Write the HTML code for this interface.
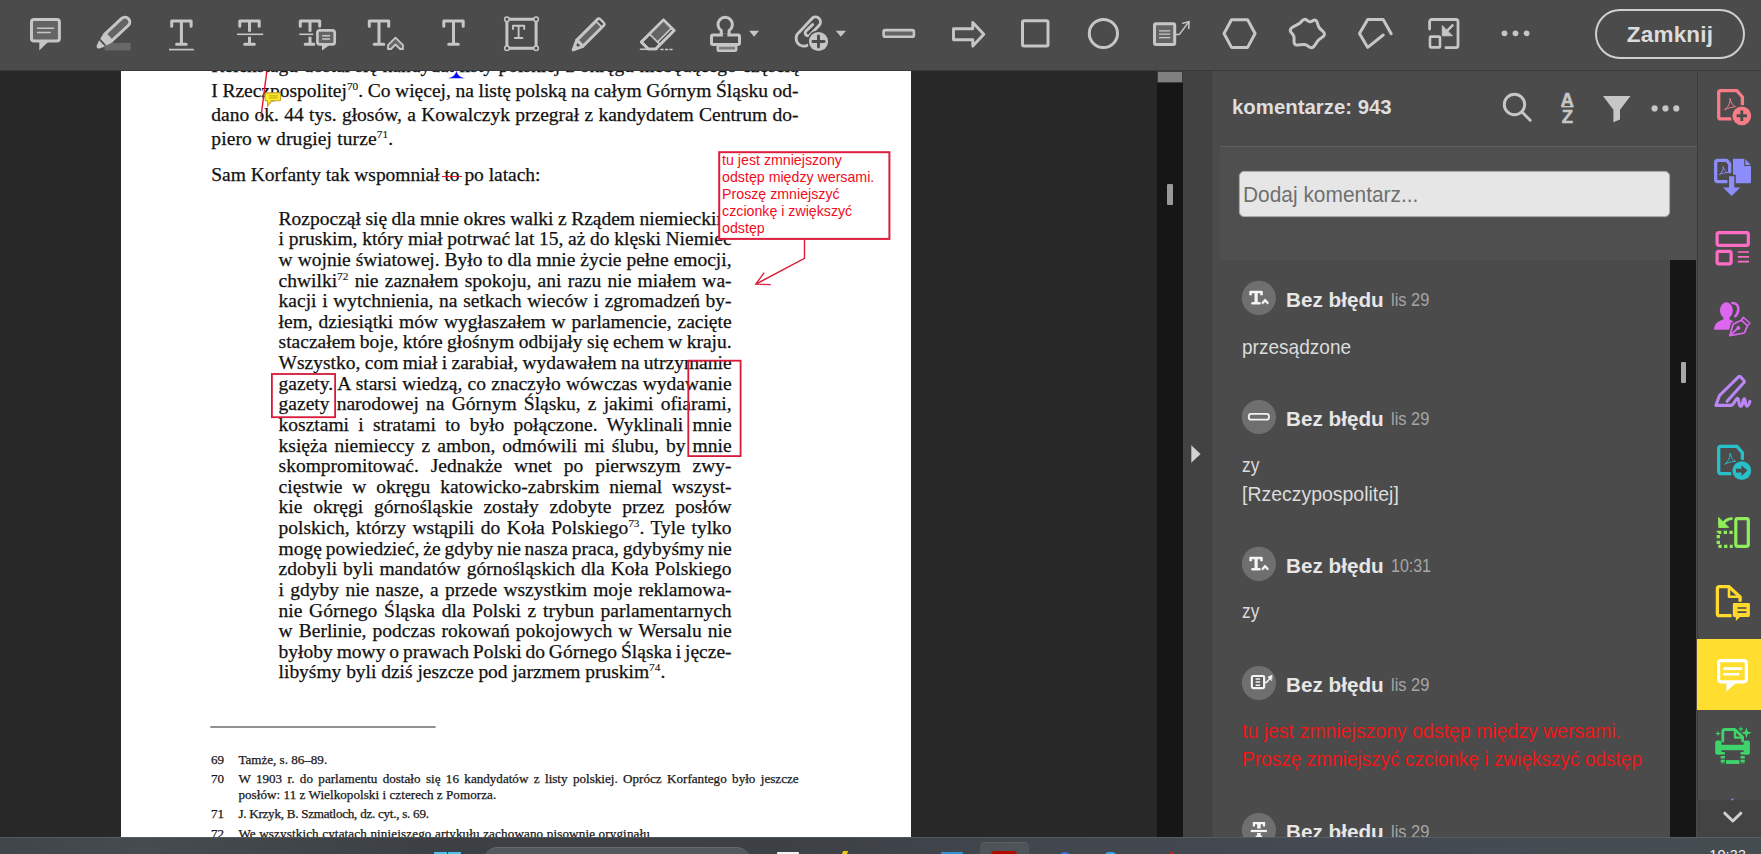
<!DOCTYPE html>
<html lang="pl">
<head>
<meta charset="utf-8">
<title>Adobe Acrobat – komentarze</title>
<style>
*{box-sizing:border-box;margin:0;padding:0}
html,body{width:1761px;height:854px;overflow:hidden;background:#282828}
body{position:relative;font-family:"Liberation Sans",sans-serif;color:#e4e4e4}
.abs{position:absolute}
#toolbar{position:absolute;left:0;top:0;width:1761px;height:71px;background:#4b4b4b;border-bottom:1px solid #3a3a3a}
#docarea{position:absolute;left:0;top:71px;width:1157px;height:766px;background:#282828;overflow:hidden}
#page{position:absolute;left:121px;top:0;width:790px;height:766px;background:#fff}
#doc{position:absolute;left:0;top:0;width:1157px;height:837px;overflow:hidden;pointer-events:none}
.bl,.fl{position:absolute;white-space:nowrap;color:#111;font-family:"Liberation Serif",serif;-webkit-text-stroke:.25px #111}
.bl{font-size:19.5px;line-height:23px}
.fl{font-size:13.1px;line-height:16px;color:#1a1a1a}
.j{text-align:justify;text-align-last:justify}
sup{font-size:58%;line-height:0;vertical-align:baseline;position:relative;top:-0.62em;-webkit-text-stroke:.12px #111}
.st{position:relative}
.st:after{content:"";position:absolute;left:-2px;right:-2px;top:57%;height:1px;background:#e8112d}
#vscroll{position:absolute;left:1157px;top:71px;width:26px;height:766px;background:#161616}
#splitter{position:absolute;left:1183px;top:71px;width:29px;height:766px;background:#424242}
#panel{position:absolute;left:1212px;top:71px;width:485px;height:766px;background:#4b4b4b;overflow:hidden;box-shadow:inset 1px 0 0 #464646}
#rail{position:absolute;left:1697px;top:71px;width:64px;height:766px;background:#4b4b4b;box-shadow:inset 1px 0 0 #3b3b3b}
#taskbar{position:absolute;left:0;top:837px;width:1761px;height:17px;background:linear-gradient(90deg,#404549 0%,#464b4f 8%,#3c4045 25%,#3d4146 45%,#42474e 60%,#444952 75%,#454d51 100%);overflow:hidden}
#closebtn{position:absolute;left:1595px;top:9px;width:150px;height:50px;border:2px solid #cfcfcf;border-radius:25px;text-align:center;line-height:47px;font-weight:bold;font-size:22.5px;color:#dcdcdc}
#closebtn span{display:inline-block;transform:scaleX(1);letter-spacing:.2px}
.sx{display:inline-block;transform-origin:0 50%;white-space:nowrap}
#phead{position:absolute;left:19.6px;top:24px;font-weight:bold;font-size:19.8px;line-height:24px;color:#dedede}
#addsec{position:absolute;left:8px;top:75px;width:477px;height:114px;background:#4f4f4f;border-top:1px solid #606060}
#addbox{position:absolute;left:27px;top:100px;width:431px;height:46px;background:#e6e6e6;border:1px solid #a9a9a9;border-radius:5px;color:#707070;font-size:22px;line-height:46.500px;padding-left:3.2px;box-shadow:0 0 0 1px #585858}
#ctrack{position:absolute;left:458px;top:189px;width:26px;height:577px;background:#161616}
#cthumb{position:absolute;left:468.5px;top:291px;width:5.5px;height:21px;background:#a8a8a8;border-radius:1px}
#railsel{position:absolute;left:0;top:568px;width:64px;height:71px;background:#ffde2f}
#railmore{position:absolute;left:0;top:729px;width:64px;height:37px;background:#434343}
.cn,.cd,.ct{position:absolute;white-space:nowrap;line-height:24px}
.cn{font-weight:bold;font-size:20px;color:#e6e6e6}
.cd{font-size:18px;color:#a6a6a6}
.ct{font-size:21px;color:#dcdcdc}
.ct.red{color:#ee1616}
#vthumb0{position:absolute;left:0;top:0;width:26px;height:12px;background:#808080;border:1px solid #3d3d3d;border-bottom-width:1px}
#vthumb{position:absolute;left:10px;top:113px;width:6px;height:21px;background:#999;border-radius:1px}
.co{position:absolute;white-space:nowrap;font-family:"Liberation Sans",sans-serif;font-size:14.2px;line-height:17px;color:#f00c1c}
</style>
</head>
<body>
<div id="docarea"><div id="page"></div></div>
<div id="doc">
<div class="bl j" style="left:211.3px;top:54.32px;width:587.3px">Reichstagu dostał się kandydat listy polskiej z okręgu niebędącego częścią</div>
<div class="bl j" style="left:211.3px;top:78.72px;width:587.3px;word-spacing:-0.293px">I Rzeczpospolitej<sup>70</sup>. Co więcej, na listę polską na całym Górnym Śląsku od-</div>
<div class="bl j" style="left:211.3px;top:102.72px;width:587.3px">dano ok. 44 tys. głosów, a Kowalczyk przegrał z kandydatem Centrum do-</div>
<div class="bl" style="left:211.3px;top:126.52px;letter-spacing:0.114px">piero w drugiej turze<sup>71</sup>.</div>
<div class="bl" style="left:211.3px;top:163.32px;letter-spacing:-0.031px">Sam Korfanty tak wspomniał <span class="st">to</span> po latach:</div>
<div class="bl j" style="left:278.6px;top:206.72px;width:453.0px;word-spacing:-0.405px">Rozpoczął się dla mnie okres walki z Rządem niemieckim</div>
<div class="bl j" style="left:278.6px;top:227.34px;width:453.0px;word-spacing:-0.219px">i pruskim, który miał potrwać lat 15, aż do klęski Niemiec</div>
<div class="bl j" style="left:278.6px;top:247.96px;width:453.0px">w wojnie światowej. Było to dla mnie życie pełne emocji,</div>
<div class="bl j" style="left:278.6px;top:268.58px;width:453.0px">chwilki<sup>72</sup> nie zaznałem spokoju, ani razu nie miałem wa-</div>
<div class="bl j" style="left:278.6px;top:289.20px;width:453.0px">kacji i wytchnienia, na setkach wieców i zgromadzeń by-</div>
<div class="bl j" style="left:278.6px;top:309.82px;width:453.0px">łem, dziesiątki mów wygłaszałem w parlamencie, zacięte</div>
<div class="bl j" style="left:278.6px;top:330.44px;width:453.0px;word-spacing:-0.541px">staczałem boje, które głośnym odbijały się echem w kraju.</div>
<div class="bl j" style="left:278.6px;top:351.06px;width:453.0px;word-spacing:-0.538px">Wszystko, com miał i zarabiał, wydawałem na utrzymanie</div>
<div class="bl j" style="left:278.6px;top:371.68px;width:453.0px">gazety. A starsi wiedzą, co znaczyło wówczas wydawanie</div>
<div class="bl j" style="left:278.6px;top:392.30px;width:453.0px">gazety narodowej na Górnym Śląsku, z jakimi ofiarami,</div>
<div class="bl j" style="left:278.6px;top:412.92px;width:453.0px">kosztami i stratami to było połączone. Wyklinali mnie</div>
<div class="bl j" style="left:278.6px;top:433.54px;width:453.0px">księża niemieccy z ambon, odmówili mi ślubu, by mnie</div>
<div class="bl j" style="left:278.6px;top:454.16px;width:453.0px">skompromitować. Jednakże wnet po pierwszym zwy-</div>
<div class="bl j" style="left:278.6px;top:474.78px;width:453.0px">cięstwie w okręgu katowicko-zabrskim niemal wszyst-</div>
<div class="bl j" style="left:278.6px;top:495.40px;width:453.0px">kie okręgi górnośląskie zostały zdobyte przez posłów</div>
<div class="bl j" style="left:278.6px;top:516.02px;width:453.0px">polskich, którzy wstąpili do Koła Polskiego<sup>73</sup>. Tyle tylko</div>
<div class="bl j" style="left:278.6px;top:536.64px;width:453.0px;word-spacing:-1.080px">mogę powiedzieć, że gdyby nie nasza praca, gdybyśmy nie</div>
<div class="bl j" style="left:278.6px;top:557.26px;width:453.0px">zdobyli byli mandatów górnośląskich dla Koła Polskiego</div>
<div class="bl j" style="left:278.6px;top:577.88px;width:453.0px">i gdyby nie nasze, a przede wszystkim moje reklamowa-</div>
<div class="bl j" style="left:278.6px;top:598.50px;width:453.0px">nie Górnego Śląska dla Polski z trybun parlamentarnych</div>
<div class="bl j" style="left:278.6px;top:619.12px;width:453.0px">w Berlinie, podczas rokowań pokojowych w Wersalu nie</div>
<div class="bl j" style="left:278.6px;top:639.74px;width:453.0px;word-spacing:-1.028px">byłoby mowy o prawach Polski do Górnego Śląska i jęcze-</div>
<div class="bl" style="left:278.6px;top:660.36px;letter-spacing:-0.022px">libyśmy byli dziś jeszcze pod jarzmem pruskim<sup>74</sup>.</div>
<div class="fl" style="left:210.9px;top:752.28px;letter-spacing:0.153px">69</div>
<div class="fl" style="left:238.4px;top:752.28px;letter-spacing:-0.007px">Tamże, s. 86–89.</div>
<div class="fl" style="left:210.9px;top:771.18px;letter-spacing:0.153px">70</div>
<div class="fl j" style="left:238.4px;top:771.18px;width:560.2px">W 1903 r. do parlamentu dostało się 16 kandydatów z listy polskiej. Oprócz Korfantego było jeszcze</div>
<div class="fl" style="left:238.4px;top:787.08px;letter-spacing:0.050px">posłów: 11 z Wielkopolski i czterech z Pomorza.</div>
<div class="fl" style="left:210.9px;top:806.38px;letter-spacing:0.153px">71</div>
<div class="fl" style="left:238.4px;top:806.38px;letter-spacing:-0.261px">J. Krzyk, B. Szmatloch, dz. cyt., s. 69.</div>
<div class="fl" style="left:210.9px;top:825.98px;letter-spacing:0.153px">72</div>
<div class="fl" style="left:238.4px;top:825.98px;letter-spacing:0.141px">We wszystkich cytatach niniejszego artykułu zachowano pisownię oryginału</div>
<svg class="abs" style="left:0;top:0" width="1157" height="837" viewBox="0 0 1157 837" fill="none">
<!-- red slanted line -->
<path d="M266.800 71L261 117" stroke="#e8112d" stroke-width="1.400"/>
<!-- blue caret -->
<path d="M456.400 70.200C457 75 459.800 77 465 78.200L448 78.200C453 77 455.800 75 456.400 70.200z" fill="#0a0aff"/>
<!-- sticky note -->
<path d="M266 92.900h13.500a1 1 0 0 1 1 1v5.900a1 1 0 0 1 -1 1h-8l-4 5.400v-5.400h-1.500a1 1 0 0 1 -1 -1v-5.900a1 1 0 0 1 1 -1z" fill="#fdee2a" stroke="#c9a227" stroke-width="1.100"/>
<path d="M269 95.900h8.800M269 98h8.800" stroke="#b8950f" stroke-width="0.900"/>
<!-- rectangles -->
<rect x="271.900" y="374" width="63.200" height="43.200" stroke="#d9193a" stroke-width="1.800"/>
<rect x="688.300" y="360.700" width="52.300" height="95.400" stroke="#d9193a" stroke-width="1.800"/>
<!-- callout -->
<path d="M804.500 239v19.400L755.800 284.200M764.200 272.600L755.800 284.200L770.800 284.600" stroke="#dc1f3e" stroke-width="1.400"/>
<rect x="719.200" y="152.200" width="170.200" height="86.700" fill="#ffffff" stroke="#dc1f3e" stroke-width="2"/>
<!-- footnote rule -->
<path d="M210.300 727h225.300" stroke="#222" stroke-width="1"/>
</svg>
<div class="co" style="left:722.100px;top:151.500px">tu jest zmniejszony<br>odstęp między wersami.<br>Proszę zmniejszyć<br>czcionkę i zwiększyć<br>odstęp</div>

</div>
<div id="vscroll"><div id="vthumb0"></div><div id="vthumb"></div></div>
<div id="splitter"><svg class="abs" style="left:0;top:0" width="29" height="766"><path d="M8.300 374.200v17.600l9.300 -8.800z" fill="#d2d2d2"/></svg></div>
<div id="panel">
<div id="phead"><span class="sx" style="transform:scaleX(1.03)">komentarze: 943</span></div>
<svg class="abs" style="left:278px;top:10px" width="200" height="50" viewBox="1490 81 200 50" fill="none" stroke="#c6c6c6" stroke-width="3" stroke-linecap="round">
<circle cx="1514.500" cy="104.500" r="10.200"/>
<path d="M1522 112l8.200 8.200"/>
<text x="1567.300" y="106.200" text-anchor="middle" font-family="Liberation Sans, sans-serif" font-weight="bold" font-size="18" fill="#c6c6c6" stroke="#c6c6c6" stroke-width=".500">A</text>
<path d="M1561.300 106.700h12.200" stroke-width="1.400" stroke-linecap="butt"/>
<text x="1567.300" y="122.700" text-anchor="middle" font-family="Liberation Sans, sans-serif" font-weight="bold" font-size="18.500" fill="#c6c6c6" stroke="#c6c6c6" stroke-width=".500">Z</text>
<path d="M1603 96.100h27.500l-10.500 13.700v9.600l-6.600 2.900v-12.500z" fill="#c6c6c6" stroke="none"/>
<g fill="#c6c6c6" stroke="none"><circle cx="1654.600" cy="108.400" r="3.100"/><circle cx="1665.500" cy="108.400" r="3.100"/><circle cx="1676.300" cy="108.400" r="3.100"/></g>
</svg>
<div id="addsec"></div>
<div id="addbox"><span class="sx" style="transform:scaleX(.95)">Dodaj komentarz...</span></div>
<svg class="abs" style="left:0;top:0" width="485" height="766" viewBox="1212 71 485 766">
<circle cx="1258.900" cy="297.9" r="17.100" fill="#6f6f6f"/>
<g stroke="#f4f4f4" fill="none" stroke-linecap="butt" stroke-linejoin="round"><path d="M1250.6 295.3v-3.300h10.900v3.300" stroke-width="2.600"/><path d="M1256.1 292.0v11.200" stroke-width="3.200"/><path d="M1252.5 303.2h7.200" stroke-width="2.500" stroke-linecap="round"/></g><path d="M1261.2 302.3l3.900 -4.300l3.900 4.300v2.100h-2.100l-1.800 -2l-1.800 2h-2.100z" fill="#f4f4f4" stroke="#6f6f6f" stroke-width="0.900"/>
<circle cx="1258.900" cy="417.0" r="17.100" fill="#6f6f6f"/>
<rect x="1248.8" y="413.9" width="20.200" height="5.800" rx="2.500" fill="none" stroke="#f2f2f2" stroke-width="1.800"/>
<circle cx="1258.900" cy="563.9" r="17.100" fill="#6f6f6f"/>
<g stroke="#f4f4f4" fill="none" stroke-linecap="butt" stroke-linejoin="round"><path d="M1250.6 561.3v-3.300h10.900v3.300" stroke-width="2.600"/><path d="M1256.1 558.0v11.200" stroke-width="3.200"/><path d="M1252.5 569.2h7.200" stroke-width="2.500" stroke-linecap="round"/></g><path d="M1261.2 568.3l3.900 -4.300l3.900 4.300v2.100h-2.100l-1.800 -2l-1.800 2h-2.100z" fill="#f4f4f4" stroke="#6f6f6f" stroke-width="0.900"/>
<circle cx="1258.900" cy="683.0" r="17.100" fill="#6f6f6f"/>
<g stroke="#f4f4f4" fill="none" stroke-linecap="round" stroke-linejoin="round"><rect x="1251.9" y="676.0" width="12.250" height="12.100" rx="1.300" stroke-width="2.200" fill="#606060"/><path d="M1255.6 678.9h4.500M1255.6 682.1h4.500M1255.6 685.3h4.500" stroke-width="1.500" stroke-linecap="butt"/><path d="M1265.2 682.5h1.200l5 -5.800" stroke-width="1.500"/><path d="M1271.8 675.2l-3.900 1.800l3.500 3.500z" fill="#f4f4f4" stroke-width="0.600"/></g>
<circle cx="1258.900" cy="830.1" r="17.100" fill="#6f6f6f"/>
<g stroke="#f4f4f4" fill="none" stroke-linecap="butt" stroke-linejoin="miter"><path d="M1253.9 826.5v-3.400h10.100v3.400" stroke-width="2.200"/><path d="M1258.9 822.0v6.400M1258.9 833.1v4" stroke-width="3.600"/><path d="M1255.7 836.6h6.500" stroke-width="2"/><path d="M1250.8 831.0h16.100" stroke-width="2.200"/></g>
</svg>
<div class="cn" style="left:74.3px;top:216.7px"><span class="sx nm" style="transform:scaleX(1.035)">Bez błędu</span></div>
<div class="cd" style="left:178.6px;top:216.7px"><span class="sx" style="transform:scaleX(0.9136)">lis 29</span></div>
<div class="ct" style="left:29.9px;top:263.7px"><span class="sx" style="transform:scaleX(0.9073)">przesądzone</span></div>
<div class="cn" style="left:74.3px;top:335.8px"><span class="sx nm" style="transform:scaleX(1.035)">Bez błędu</span></div>
<div class="cd" style="left:178.6px;top:335.8px"><span class="sx" style="transform:scaleX(0.9136)">lis 29</span></div>
<div class="ct" style="left:29.9px;top:381.9px"><span class="sx" style="transform:scaleX(0.8238)">zy</span></div>
<div class="ct" style="left:29.9px;top:410.6px"><span class="sx" style="transform:scaleX(0.9264)">[Rzeczypospolitej]</span></div>
<div class="cn" style="left:74.3px;top:482.7px"><span class="sx nm" style="transform:scaleX(1.035)">Bez błędu</span></div>
<div class="cd" style="left:178.6px;top:482.7px"><span class="sx" style="transform:scaleX(0.8880)">10:31</span></div>
<div class="ct" style="left:29.9px;top:527.7px"><span class="sx" style="transform:scaleX(0.8238)">zy</span></div>
<div class="cn" style="left:74.3px;top:601.8px"><span class="sx nm" style="transform:scaleX(1.035)">Bez błędu</span></div>
<div class="cd" style="left:178.6px;top:601.8px"><span class="sx" style="transform:scaleX(0.9136)">lis 29</span></div>
<div class="ct red" style="left:29.9px;top:647.8px"><span class="sx" style="transform:scaleX(0.9278)">tu jest zmniejszony odstęp między wersami.</span></div>
<div class="ct red" style="left:29.9px;top:675.9px"><span class="sx" style="transform:scaleX(0.9063)">Proszę zmniejszyć czcionkę i zwiększyć odstęp</span></div>
<div class="cn" style="left:74.3px;top:748.9px"><span class="sx nm" style="transform:scaleX(1.035)">Bez błędu</span></div>
<div class="cd" style="left:178.6px;top:748.9px"><span class="sx" style="transform:scaleX(0.9136)">lis 29</span></div>
<div id="ctrack"></div><div id="cthumb"></div>

</div>
<div id="rail">
<div id="railsel"></div>
<div id="railmore"></div>
<svg class="abs" style="left:0;top:0" width="64" height="766" viewBox="1697 71 64 766" fill="none" stroke-linejoin="round" stroke-linecap="round">
<!-- 1 create pdf -->
<g stroke="#f97c86" stroke-width="3.300">
<path d="M1731 118.900h-10.300a2 2 0 0 1 -2 -2v-24.200a2 2 0 0 1 2 -2h16.300l5.400 6.300v8"/>
<path d="M1725 109.500c3 -2 5.500 -7 5 -11c1 4.500 3.500 8 6.500 8.500c-4 -0.300 -8 0.800 -11.500 2.500z" stroke-width="1"/>
</g>
<circle cx="1741.800" cy="115.800" r="10.900" fill="#4b4b4b"/>
<circle cx="1741.800" cy="115.800" r="9.400" fill="#f97c86"/>
<path d="M1741.800 110.600v10.400M1736.600 115.800h10.400" stroke="#4b4b4b" stroke-width="2.900" stroke-linecap="butt"/>
<!-- 2 export pdf -->
<g stroke="#8c8cfb" stroke-width="3.300">
<path d="M1729.500 181.600h-11.800a2 2 0 0 1 -2 -2v-17.200a2 2 0 0 1 2 -2h9l3 3.400v8"/>
<path d="M1719.500 174.500c2.200 -1.500 4 -5 3.700 -8c0.800 3.300 2.600 5.800 4.800 6.200c-3 -0.200 -6 0.600 -8.500 1.800z" stroke-width="0.900"/>
</g>
<path d="M1733 158.700h12l6 6.600v16.500a1.500 1.500 0 0 1 -1.500 1.500h-16.500z" fill="#8c8cfb"/>
<path d="M1744.800 158.900v6.600h6" fill="none" stroke="#4b4b4b" stroke-width="1.100" stroke-linejoin="miter"/>
<path d="M1727.400 174.700h8.400v11.400h6.500l-10.600 11.300l-10.600 -11.300h6.300z" fill="#4b4b4b"/>
<path d="M1729 176.200h5.300v11.400h6l-8.600 8.300l-8.600 -8.300h5.900z" fill="#8c8cfb"/>
<!-- 3 organize -->
<g stroke="#ff6ec4" stroke-width="3.200">
<rect x="1717.100" y="232.600" width="31.200" height="12.700" rx="1.800"/>
<rect x="1717.100" y="251.300" width="14" height="12.600" rx="1.800"/>
<path d="M1737.800 252h11.200M1737.800 256.800h11.200M1737.800 261.700h11.200" stroke-width="1.700" stroke-linecap="butt"/>
</g>
<!-- 4 request signatures -->
<g fill="#dc66f0">
<ellipse cx="1726.400" cy="310.300" rx="6.500" ry="8"/><rect x="1723.300" y="316" width="6.200" height="5"/>
<path d="M1714 329.800c0 -6 4 -8.500 9 -10.300h6.600c2 0.800 3.400 1.600 4.600 2.800l-3.800 7.500z"/>
</g>
<path d="M1732.400 303c4.300 -0.400 6.300 3.500 5.900 7c-0.300 2.800 -1.400 4.700 -3 6.200" stroke="#dc66f0" stroke-width="2.600"/>
<g stroke="#dc66f0" stroke-width="1.700">
<path d="M1729.800 335.700l3.300 -11.500l8.200 -4l6.200 5.600l-3.200 7.200z" fill="#4b4b4b" stroke="#4b4b4b" stroke-width="4.500"/>
<path d="M1729.800 335.700l3.300 -11.500l8.200 -4l6.200 5.600l-3.200 7.200z"/>
<path d="M1730.200 335.200l7.300 -6.600"/>
<circle cx="1738.300" cy="327.900" r="1.100" fill="#dc66f0"/>
<path d="M1741.300 320.200l2 -2.900l6.700 6l-2.600 2.400" stroke-width="1.500"/>
</g>
<!-- 5 fill & sign -->
<path d="M1727.100 401.300L1743.900 382.500Q1744.800 381.500 1743.900 380.500L1740.500 376.800Q1739.500 375.800 1738.500 376.800L1719.500 395.500L1715.900 405.400H1730.500C1734.500 405.400 1735.300 398.300 1737.400 398.300C1739.400 398.300 1738.300 406.200 1740.800 406.200C1743.300 406.200 1742.300 398.900 1744.300 398.900C1746 398.900 1744.800 406.200 1747 406.200C1748.600 406.200 1749.300 403.500 1749.900 401.400" stroke="#bb86f5" stroke-width="3.100"/>
<!-- 6 send -->
<g stroke="#27bfc8" stroke-width="3.300">
<path d="M1731 473.600h-10.300a2 2 0 0 1 -2 -2v-23.200a2 2 0 0 1 2 -2h16.300l5.400 6.300v7"/>
<path d="M1725 464c3 -2 5.500 -7 5 -11c1 4.500 3.500 8 6.500 8.500c-4 -0.300 -8 0.800 -11.500 2.500z" stroke-width="1"/>
</g>
<circle cx="1741.800" cy="470.600" r="10.900" fill="#4b4b4b"/>
<circle cx="1741.800" cy="470.600" r="9.400" fill="#27bfc8"/>
<path d="M1736 468.700h5.500v-3.400l6 5.300l-6 5.300v-3.400h-5.500z" fill="#4b4b4b"/>
<!-- 7 crop/scan -->
<g stroke="#90ee5c" stroke-width="3.200">
<rect x="1735.800" y="518.600" width="12.500" height="27.700" rx="1.800"/>
<path d="M1732.700 532.300H1718.300V546.300H1732.700" stroke-dasharray="3.300 2.400" stroke-linecap="butt" stroke-linejoin="miter" stroke-width="3.300"/>
<path d="M1731.500 518.600c-4 0.300 -7 2.300 -8.500 5.500" stroke-width="2.800"/>
<path d="M1718.600 517.800l0.200 9.700l9.600 -0.200z" fill="#90ee5c" stroke-width="1"/>
</g>
<!-- 8 comment doc -->
<g stroke="#ffd92e" stroke-width="3.300">
<path d="M1731 615.700h-11.600a2 2 0 0 1 -2 -2v-25a2 2 0 0 1 2 -2h9.600l11.100 10.200v4"/>
<path d="M1729 586.800v9.900h11" stroke-width="2.600"/>
</g>
<path d="M1734.200 602.300h14.300a2 2 0 0 1 2 2v11.200a2 2 0 0 1 -2 2h-8l-5.300 5v-5h-1a2 2 0 0 1 -2 -2v-11.200a2 2 0 0 1 2 -2z" fill="#ffd92e" stroke="#4b4b4b" stroke-width="1.200"/>
<path d="M1737.500 608h9M1737.500 612.200h9" stroke="#4b4b4b" stroke-width="1.700" stroke-linecap="butt"/>
<!-- 9 comment selected -->
<g stroke="#ffffff" stroke-width="3.200">
<rect x="1718.600" y="660.600" width="27.700" height="21.200" rx="2.500"/>
<path d="M1726.600 683v8l9.100 -8z" fill="#ffffff" stroke-width="0.500"/>
<path d="M1723.100 668.600h19.200M1723.100 674.300h16.100" stroke-width="2.600" stroke-linecap="butt"/>
</g>
<!-- 10 print -->
<g stroke="#3fd36c" stroke-width="2.800">
<path d="M1722.800 741v-9.500a2 2 0 0 1 2 -2h10l7.800 7.600v4"/>
<path d="M1735 730v7.600h7.300" stroke-width="2.400"/>
<g fill="#3fd36c" stroke="none"><rect x="1715.200" y="740.400" width="6.300" height="14.400" rx="2"/><rect x="1743.600" y="740.400" width="6.300" height="14.400" rx="2"/><rect x="1716" y="744.800" width="33" height="5.400"/></g>
<path d="M1722.800 752v12M1742.700 752v12" stroke-width="4.200" stroke-dasharray="2.600 1.300" stroke-linecap="butt"/>
<path d="M1726 762h13.500" stroke-width="3.800" stroke-linecap="butt"/>
<path d="M1746.400 727.300l1.300 4.100l4.100 1.400l-4.100 1.400l-1.300 4.100l-1.300 -4.100l-4.100 -1.400l4.100 -1.400z" fill="#3fd36c" stroke="none"/>
<path d="M1740.800 726l0.700 2.300l2.300 0.700l-2.300 0.700l-0.700 2.300l-0.700 -2.300l-2.300 -0.700l2.300 -0.700z" fill="#3fd36c" stroke="none"/>
<path d="M1718 730.500l0.700 2.300l2.300 0.700l-2.300 0.700l-0.700 2.300l-0.700 -2.300l-2.300 -0.700l2.300 -0.700z" fill="#3fd36c" stroke="none"/>
</g>
<path d="M1725 746.300h15" stroke="#4b4b4b" stroke-width="0"/>
<!-- chevron -->
<path d="M1724.800 813.200l8 7.800l8 -7.800" stroke="#d0d0d0" stroke-width="3"/>
<circle cx="1732.400" cy="799.600" r="1" fill="#8c8cfb"/>
</svg>

</div>
<div id="toolbar">
<svg id="tbicons" class="abs" style="left:0;top:0" width="1580" height="70" viewBox="0 0 1580 70" fill="none" stroke="#c6c6c6" stroke-width="3" stroke-linejoin="round" stroke-linecap="round">
<!-- 1 comment bubble -->
<rect x="31.500" y="19.600" width="27.900" height="21.400" rx="2.500" fill="#646464"/>
<path d="M39.300 42v8.400l8.700 -8.400z" fill="#c6c6c6" stroke="none"/>
<path d="M37 28.300h17.200M37 32.600h13.800" stroke-width="1.500" stroke-linecap="butt"/>
<!-- 2 highlighter -->
<rect x="104.600" y="43" width="26.100" height="7.400" fill="#686868" stroke="none"/>
<g transform="translate(116.850 29.550) rotate(47)">
<path d="M-4.800 11.500v-22.600a4.800 4.800 0 0 1 9.600 0v22.600z" fill="#646464"/>
<path d="M-6.300 11.500h12.600l-1.800 6.800h-9z" fill="#c6c6c6" stroke="#4b4b4b" stroke-width="0.010"/>
<path d="M-4.200 20.200h8.400l-2.200 5.400a2.200 2.200 0 0 1 -4 0z" fill="#c6c6c6" stroke="none"/>
<path d="M-6.300 11.500h12.600l-1.800 6.800h-9z" fill="#c6c6c6" stroke="none"/>
</g>
<!-- 3 T underline -->
<g transform="translate(181.400 0)"><path d="M-9.700 26.300v-5.300h19.400v5.300M0 21v23.200M-4.800 44.200h9.600"/></g>
<path d="M169 49.600h24.800" stroke-width="1.700" stroke-linecap="butt"/>
<!-- 4 T strike -->
<g transform="translate(249.500 0)"><path d="M-9.700 26.300v-5.300h19.400v5.300M0 21v23.200M-4.800 44.200h9.600"/></g>
<path d="M236 34.300h28" stroke="#4b4b4b" stroke-width="5" stroke-linecap="butt"/>
<path d="M237 34.300h26.200" stroke-width="1.600" stroke-linecap="butt"/>
<!-- 5 T strike + bubble -->
<g transform="translate(310 0)"><path d="M-9.700 26.300v-5.300h19.400v5.300M0 21v23.200M-4.800 44.200h9.600"/></g>
<path d="M298 34.300h20" stroke="#4b4b4b" stroke-width="5" stroke-linecap="butt"/>
<path d="M299.300 34.300h14" stroke-width="1.600" stroke-linecap="butt"/>
<rect x="315" y="27.900" width="22" height="24" fill="#4b4b4b" stroke="none"/>
<rect x="317.400" y="30.300" width="17.300" height="14.100" rx="2.500" fill="#646464" stroke-width="2.700"/>
<path d="M322 45v5.400l7.600 -5.400z" fill="#c6c6c6" stroke="none"/>
<path d="M322.200 35.700h7.800M322.200 38.900h7.800" stroke-width="1.500" stroke-linecap="butt"/>
<!-- 6 T + caret -->
<g transform="translate(379 0)"><path d="M-9.700 26.300v-5.300h19.400v5.300M0 21v23.200M-4.800 44.200h9.600"/></g>
<path d="M395.500 36l9.500 9.500v5.500h-5.500l-4 -4l-4 4h-5.500v-5.500z" fill="#4b4b4b" stroke="none"/>
<path d="M395.500 37.700l7.500 7.500v3.800h-3l-4.500 -4.500l-4.500 4.500h-3v-3.800z" fill="#686868" stroke-width="1.800"/>
<!-- 7 T -->
<g transform="translate(453.500 0)"><path d="M-9.700 26.300v-5.300h19.400v5.300M0 21v23.200M-4.800 44.200h9.600"/></g>
<!-- 8 text box -->
<rect x="506.900" y="19.200" width="29.200" height="29" stroke-width="3"/>
<g fill="#4b4b4b" stroke-width="1.500">
<circle cx="506.900" cy="19.200" r="2.300"/><circle cx="536.100" cy="19.200" r="2.300"/><circle cx="506.900" cy="48.200" r="2.300"/><circle cx="536.100" cy="48.200" r="2.300"/>
</g>
<path d="M513 29v-3.300h11.200v3.300M518.600 26v12M514.800 38h7.600" stroke-width="1.900"/>
<!-- 9 pencil -->
<g transform="translate(587.400 35.650) rotate(45)">
<path d="M-4.300 10.650v-29a2 2 0 0 1 2 -2h4.600a2 2 0 0 1 2 2v29z" fill="#646464" stroke-width="3"/>
<rect x="-3" y="-19.500" width="6" height="3" fill="#464646" stroke="none"/>
<path d="M-4.300 -16.200h8.600" stroke-width="1.800" stroke-linecap="butt"/>
<path d="M-4.300 10.650h8.600l-4.300 9.400z" fill="#464646" stroke-width="3"/>
<path d="M-4.300 10.650h8.600" stroke-width="1.800"/>
<path d="M-2 15.500h4l-2 4.800z" fill="#c6c6c6" stroke-width="1.500"/>
</g>
<!-- 10 eraser -->
<path d="M663.500 19.840l10.660 10.660l-18.500 18.500h-7.360l-6.960 -7z" fill="#484848" stroke-width="2.600"/>
<path d="M649.400 33.940l14.140 -14.140l8.130 8.130l-14.140 14.140z" fill="#646464" stroke="none"/>
<path d="M649.400 33.940l10.680 10.680M657.530 42.070l14.140 -14.140" stroke-width="1.700" stroke-linecap="butt"/>
<path d="M663.500 19.840l10.660 10.660l-18.500 18.500h-7.360l-6.960 -7z" fill="none" stroke-width="2.600"/>
<path d="M640.500 49.300h16.500" stroke-width="1.600"/>
<path d="M660.300 49.600h3.300M665 49.600h3.200M669.400 49.600h3.200" stroke-width="1.500" stroke-linecap="butt"/>
<!-- 11 stamp -->
<rect x="711.500" y="35.100" width="28" height="9.300" rx="1.500" stroke-width="3"/>
<path d="M722.800 35.100h4.800" stroke="#4b4b4b" stroke-width="3.400" stroke-linecap="butt"/>
<path d="M721.300 36v-5.500a7.200 7.200 0 1 1 7.800 0v5.500" stroke-width="3" stroke-linecap="butt"/>
<rect x="717.700" y="45.500" width="18.500" height="5.300" rx="1" fill="#7c7c7c" stroke-width="2.400"/>
<path d="M749.200 30.700h9.800l-4.900 6z" fill="#c6c6c6" stroke="none"/>
<!-- 12 paperclip + -->
<path d="M808.500 44.600A7.500 7.500 0 0 1 799.200 32.200L812.500 18A5 5 0 0 1 819.500 25L810 35A2.800 2.800 0 0 1 806 31L812.600 24.600" stroke-width="2.900"/>
<circle cx="818.500" cy="41.500" r="11" fill="#4b4b4b" stroke="none"/>
<circle cx="818.500" cy="41.500" r="9.600" fill="#c6c6c6" stroke="none"/>
<path d="M818.500 35.900v11.200M812.900 41.500h11.200" stroke="#4b4b4b" stroke-width="2.900"/>
<path d="M835.800 30.700h10.200l-5.100 6z" fill="#c6c6c6" stroke="none"/>
<!-- 13 line -->
<rect x="883.600" y="30.100" width="30.300" height="6.600" rx="1.500" fill="#646464" stroke-width="2.600"/>
<!-- 14 arrow -->
<path d="M953.500 28.800h19.300v-6.300l11 11.800l-11 11.800v-6.300h-19.300z" fill="#4d4d4d" stroke-width="2.900"/>
<!-- 15 square -->
<rect x="1022.500" y="20.800" width="25.500" height="25.300" rx="1.500" stroke-width="3"/>
<!-- 16 circle -->
<circle cx="1103.400" cy="33.500" r="14.100" stroke-width="3"/>
<!-- 17 callout -->
<rect x="1154.500" y="23.700" width="20.200" height="20.800" rx="1.500" fill="#646464" stroke-width="3"/>
<path d="M1159 30.800h11.200M1159 34.200h11.200M1159 37.600h11.200" stroke-width="1.300" stroke-linecap="butt"/>
<path d="M1176 34.400h3.400l9.500 -12.600M1182.800 23.300l6.300 -1.700l-0.400 7" stroke-width="1.500"/>
<!-- 18 hexagon -->
<path d="M1224 33.500l7.500 -13.800h16.100l7.500 13.800l-7.500 13.900h-16.100z" stroke-width="3"/>
<!-- 19 cloud -->
<path d="M1304.3 19.4C1306.8 19.0 1307.2 21.5 1309.9 21.7C1312.6 21.9 1313.5 18.8 1315.7 20.2C1317.9 21.6 1317.1 24.3 1319.2 27.6C1321.3 30.9 1324.8 31.3 1324.5 34.3C1324.2 37.3 1321.0 37.3 1318.1 40.4C1315.2 43.5 1315.4 46.5 1312.2 47.5C1309.0 48.5 1308.6 45.2 1304.6 44.5C1300.6 43.8 1297.7 46.4 1295.2 44.5C1292.7 42.6 1294.9 39.8 1293.8 36.3C1292.7 32.8 1289.2 32.3 1290.5 29.3C1291.8 26.3 1296.1 25.8 1299.3 23.5C1302.5 21.2 1301.8 19.8 1304.3 19.4z" stroke-width="3"/>
<!-- 20 open polygon -->
<path d="M1383.200 35l-15.500 12.400l-8.200 -13.800l8.200 -14.200h15.500l8 14.400" stroke-width="3"/>
<!-- 21 shrink -->
<path d="M1429.600 29v-7.300a2.200 2.200 0 0 1 2.200 -2.200h24a2.200 2.200 0 0 1 2.200 2.200v23.800a2.200 2.200 0 0 1 -2.200 2.200h-9.800" stroke-width="2.800"/>
<rect x="1430" y="36.600" width="10" height="10.800" rx="1" stroke-width="2.600"/>
<path d="M1442.300 26v9.800h9.800z" fill="#c6c6c6" stroke-width="1"/>
<path d="M1452.500 25.400l-7 7" stroke-width="2.600"/>
<!-- 22 dots -->
<g fill="#c6c6c6" stroke="none"><circle cx="1504.500" cy="33.300" r="2.900"/><circle cx="1515.500" cy="33.300" r="2.900"/><circle cx="1526.600" cy="33.300" r="2.900"/></g>
</svg>
<div id="closebtn"><span>Zamknij</span></div>

</div>
<div id="taskbar">
<div class="abs" style="left:0;top:0;width:1761px;height:1px;background:rgba(255,255,255,.10)"></div>
<div class="abs" style="left:482.500px;top:10px;width:268px;height:30px;border-radius:15px;background:#53585d;border-top:1px solid #666b70"></div>
<div class="abs" style="left:979.500px;top:5px;width:49px;height:30px;border-radius:5px;background:#4e5358;border-top:1px solid #5c6166"></div>
<div class="abs" style="left:434px;top:14.500px;width:12.500px;height:6px;background:#4cc2ee"></div>
<div class="abs" style="left:448px;top:14.500px;width:12.500px;height:6px;background:#4cc2ee"></div>
<div class="abs" style="left:777px;top:15px;width:22px;height:6px;background:#f3f3f3;border-radius:1px 1px 0 0"></div>
<div class="abs" style="left:841.500px;top:14px;width:5px;height:6px;background:#f2c811;transform:skewX(-20deg)"></div>
<div class="abs" style="left:941px;top:14.500px;width:21.500px;height:6px;background:#2f8fd8;border-radius:1px 1px 0 0"></div>
<div class="abs" style="left:991px;top:14px;width:26px;height:8px;background:#b30b00;border-radius:4px 4px 0 0"></div>
<div class="abs" style="left:1059px;top:14.500px;width:12px;height:12px;background:#3a78e0;border-radius:6px"></div>
<div class="abs" style="left:1104px;top:14.500px;width:13px;height:12px;background:#35a5e6;border-radius:5px"></div>
<div class="abs" style="left:1168.500px;top:15px;width:3px;height:6px;background:#d81e1e;transform:skewX(-25deg)"></div>
<div class="abs" style="left:1709.300px;top:10.300px;font-size:14.300px;line-height:17px;color:#f4f4f4;letter-spacing:.2px">10:33</div>

</div>
</body>
</html>
